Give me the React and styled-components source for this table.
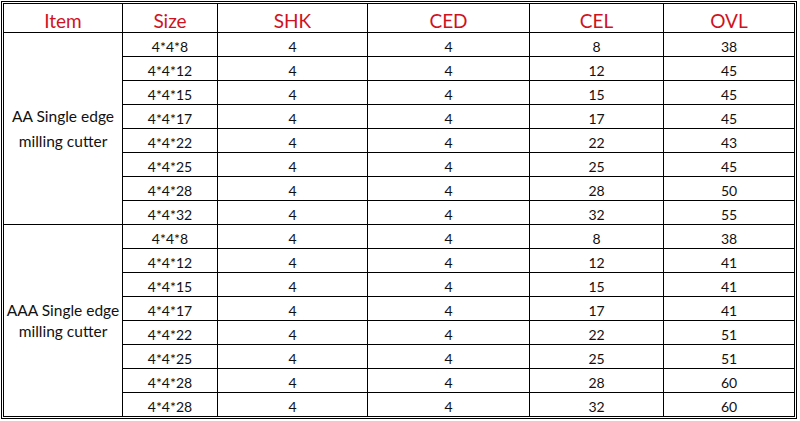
import React from "react";
import styled, { createGlobalStyle } from "styled-components";

const Global = createGlobalStyle`
  html, body { margin: 0; padding: 0; background: #ffffff; }
  body { font-family: Lato, "Open Sans", sans-serif; }
`;

const Page = styled.div`
  width: 800px;
  height: 421px;
  padding: 1px 0 0 1px;
  box-sizing: border-box;
  background: #fff;
`;

const Frame = styled.div`
  display: inline-block;
  border: 3px double #000;
`;

const Grid = styled.div`
  display: grid;
  grid-template-columns: 118px 94px 149px 161px 133px 130px;
  grid-template-rows: 28px repeat(16, 23px);
  gap: 1px;
  background: #000;
`;

const Cell = styled.div`
  background: #fff;
  display: flex;
  align-items: center;
  justify-content: center;
  text-align: center;
  color: #111;
  font-size: 14px;
  padding-top: 3px;
  box-sizing: border-box;
  white-space: nowrap;
`;

const HeadCell = styled(Cell)`
  color: #d0121e;
  font-size: 19px;
  padding-top: 4px;
`;

const ItemCell = styled(Cell)`
  grid-row: span 8;
  flex-direction: column;
  font-size: 15.5px;
  line-height: ${(p) => p.$lh}px;
  padding-top: 1px;
  overflow: visible;
`;

const Line = styled.span`
  display: block;
  white-space: nowrap;
`;

const headers = ["Item", "Size", "SHK", "CED", "CEL", "OVL"];

const groups = [
  {
    name: ["AA Single edge", "milling cutter"],
    lh: 25,
    rows: [
      ["4*4*8", 8, 38],
      ["4*4*12", 12, 45],
      ["4*4*15", 15, 45],
      ["4*4*17", 17, 45],
      ["4*4*22", 22, 43],
      ["4*4*25", 25, 45],
      ["4*4*28", 28, 50],
      ["4*4*32", 32, 55],
    ],
  },
  {
    name: ["AAA Single edge", "milling cutter"],
    lh: 21,
    rows: [
      ["4*4*8", 8, 38],
      ["4*4*12", 12, 41],
      ["4*4*15", 15, 41],
      ["4*4*17", 17, 41],
      ["4*4*22", 22, 51],
      ["4*4*25", 25, 51],
      ["4*4*28", 28, 60],
      ["4*4*28", 32, 60],
    ],
  },
];

export default function App() {
  return (
    <>
      <Global />
      <Page>
        <Frame>
          <Grid>
            {headers.map((h) => (
              <HeadCell key={h}>{h}</HeadCell>
            ))}
            {groups.map((g, gi) =>
              g.rows.map((r, ri) => (
                <React.Fragment key={`${gi}-${ri}`}>
                  {ri === 0 && (
                    <ItemCell $lh={g.lh}>
                      <Line>{g.name[0]}</Line>
                      <Line>{g.name[1]}</Line>
                    </ItemCell>
                  )}
                  <Cell>{r[0]}</Cell>
                  <Cell>4</Cell>
                  <Cell>4</Cell>
                  <Cell>{r[1]}</Cell>
                  <Cell>{r[2]}</Cell>
                </React.Fragment>
              ))
            )}
          </Grid>
        </Frame>
      </Page>
    </>
  );
}
